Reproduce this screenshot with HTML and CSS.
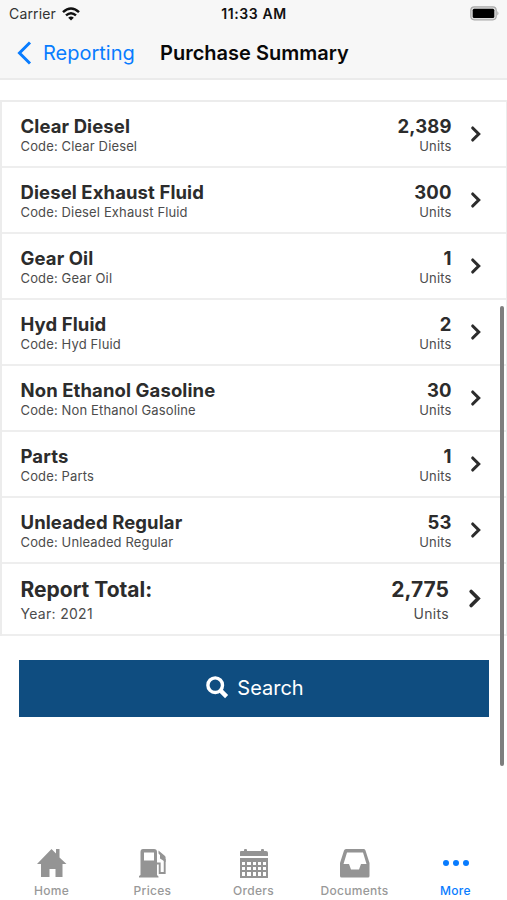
FILE: index.html
```html
<!DOCTYPE html>
<html lang="en">
<head>
<meta charset="utf-8">
<title>Purchase Summary</title>
<link rel="stylesheet" href="styles.css">
</head>
<body>
<svg width="0" height="0" class="defs"><symbol id="chevron" viewBox="0 0 12 18"><path d="M2.700 3 8.700 9 2.700 15" fill="none" stroke="#2c2c2c" stroke-width="3.100" stroke-linecap="round" stroke-linejoin="miter"/></symbol></svg>
<div class="app">
  <header class="header">
    <div class="status">
      <div class="carrier"><span>Carrier</span>
        <svg width="18" height="14" viewBox="0 0 18 14" fill="none" stroke="#111" stroke-width="2.5"><path d="M1 5.2Q9-2.2 17 5.2M4 8.4Q9 4 14 8.4"/><path d="M9 13.5 6.2 10.7Q9 8.4 11.8 10.7Z" fill="#111" stroke="none"/></svg>
      </div>
      <span class="time">11:33 AM</span>
      <svg class="battery" width="31" height="15" viewBox="0 0 31 15"><rect x="1.800" y=".8" width="25.400" height="13" rx="3.5" fill="#ddd" stroke="#aaa" stroke-width="1.2"/><rect x="3.700" y="2.7" width="21.600" height="9.2" rx="1.5"/><path d="M28.3 5q2.4 2.3 0 4.6z" fill="#aaa"/></svg>
    </div>
    <div class="nav">
      <a class="back"><svg width="15" height="24" viewBox="0 0 15 24"><path d="M13 1.5 2.5 12 13 22.500" fill="none" stroke="#087cff" stroke-width="3"/></svg><span>Reporting</span></a>
      <h1>Purchase Summary</h1>
    </div>
  </header>
  <main>
    <div class="list">
      <div class="row"><div class="info"><b>Clear Diesel</b><span>Code: Clear Diesel</span></div><div class="amount"><b>2,389</b><span>Units</span></div><svg class="chevron"><use href="#chevron"/></svg></div>
      <div class="row"><div class="info"><b>Diesel Exhaust Fluid</b><span>Code: Diesel Exhaust Fluid</span></div><div class="amount"><b>300</b><span>Units</span></div><svg class="chevron"><use href="#chevron"/></svg></div>
      <div class="row"><div class="info"><b>Gear Oil</b><span>Code: Gear Oil</span></div><div class="amount"><b>1</b><span>Units</span></div><svg class="chevron"><use href="#chevron"/></svg></div>
      <div class="row"><div class="info"><b>Hyd Fluid</b><span>Code: Hyd Fluid</span></div><div class="amount"><b>2</b><span>Units</span></div><svg class="chevron"><use href="#chevron"/></svg></div>
      <div class="row"><div class="info"><b>Non Ethanol Gasoline</b><span>Code: Non Ethanol Gasoline</span></div><div class="amount"><b>30</b><span>Units</span></div><svg class="chevron"><use href="#chevron"/></svg></div>
      <div class="row"><div class="info"><b>Parts</b><span>Code: Parts</span></div><div class="amount"><b>1</b><span>Units</span></div><svg class="chevron"><use href="#chevron"/></svg></div>
      <div class="row"><div class="info"><b>Unleaded Regular</b><span>Code: Unleaded Regular</span></div><div class="amount"><b>53</b><span>Units</span></div><svg class="chevron"><use href="#chevron"/></svg></div>
      <div class="row total"><div class="info"><b>Report Total:</b><span>Year: 2021</span></div><div class="amount"><b>2,775</b><span>Units</span></div><svg class="chevron"><use href="#chevron"/></svg></div>
    </div>
    <button class="search"><svg width="23" height="23" viewBox="0 0 23 23" fill="none" stroke="#fff"><circle cx="9.200" cy="9.200" r="7.300" stroke-width="3.400"/><path d="m14.600 14.600 6 6" stroke-width="4.400" stroke-linecap="butt"/></svg><span>Search</span></button>
  </main>
  <nav class="tabs">
    <a><svg width="32" height="32" viewBox="0 0 32 32" fill="#949494"><path d="M1 17 15.500 2l4.500 4.500V2h3.500v8.500l7 6.500h-4v13h-7v-8h-6v8H5V17z"/></svg><span>Home</span></a>
    <a><svg width="32" height="32" viewBox="0 0 32 32" fill="#949494"><path fill-rule="evenodd" d="M6 2h11q3 0 3 3v23l1.500 1.500V30.500H2v-1.500L3.500 28V5Q3.500 2 6 2ZM7 5.500v8h10v-8Z"/><path d="M20 16.500h2.700V26h5V12" fill="none" stroke="#949494" stroke-width="1.900"/><path d="M21.500 3.500 28 9q.6.600.6 1.500V15l-5.600-3.500V8l-1.500-1.500z"/></svg><span>Prices</span></a>
    <a><svg width="32" height="32" viewBox="0 0 32 32" fill="#949494"><path d="M2 5q0-1 1-1h3V3q0-1 1-1h1q1 0 1 1v1h14V3q0-1 1-1h1q1 0 1 1v1h2q2 0 2 2v3H2z"/><path fill-rule="evenodd" d="M2 11h28v20H2zM4 15v3h3v-3zm5 0v3h4v-3zm6 0v3h3v-3zm5 0v3h3v-3zm5 0v3h3v-3zM4 20v3h3v-3zm5 0v3h4v-3zm6 0v3h3v-3zm5 0v3h3v-3zm5 0v3h3v-3zM4 25v4h3v-4zm5 0v4h4v-4zm6 0v4h3v-4zm5 0v4h3v-4zm5 0v4h3v-4z"/></svg><span>Orders</span></a>
    <a><svg width="32" height="32" viewBox="0 0 32 32" fill="#949494"><path fill-rule="evenodd" d="M7 2h18q1 0 1.500 1.500L30.500 16v13q0 1.500-1.500 1.500H2.500Q1 30.500 1 29V16L5 3.500Q5.500 2 7 2ZM8 5.500 4.500 17H10l2 5.500h8l2-5.500h5.500L24 5.500Z"/></svg><span>Documents</span></a>
    <a class="active"><svg width="32" height="32" viewBox="0 0 32 32" fill="#087cff"><circle cx="6" cy="16" r="3"/><circle cx="16" cy="16" r="3"/><circle cx="26" cy="16" r="3"/></svg><span>More</span></a>
  </nav>
  <div class="scrollbar"></div>
</div>
</body>
</html>
```
FILE: styles.css
```css
* { box-sizing: border-box; }
body { margin: 0; font-family: Inter, "Liberation Sans", sans-serif; background: #fff; color: #2c2c2c; }
.defs { position: absolute; }
.app { position: relative; width: 507px; height: 900px; display: flex; flex-direction: column; overflow: hidden; }
.header { height: 80px; background: #f7f7f7; border-bottom: 2px solid #ebebeb; }
.status { height: 27px; display: grid; grid-template-columns: 1fr auto 1fr; align-items: center; padding: 0 7px 0 9px; }
.carrier { display: flex; align-items: center; gap: 6px; font-size: 14px; letter-spacing: .15px; color: #333; }
.time { font-size: 14px; font-weight: 600; color: #111; letter-spacing: .6px; margin-right: 1px; }
.battery { justify-self: end; }
.nav { height: 50px; display: flex; align-items: center; padding: 1px 0 0 17px; }
.back { display: flex; align-items: center; gap: 11px; width: 143px; color: #087cff; font-size: 20px; }
h1 { margin: 0; font-size: 20px; font-weight: 600; color: #080808; white-space: nowrap; letter-spacing: 0; }
main { flex: 1; padding-top: 20px; }
.list { border: 2px solid #ececec; border-right-width: 1px; border-bottom: 0; }
.row { height: 66px; display: flex; align-items: flex-start; border-bottom: 2px solid #eee; padding: 12px 24px 0 18.500px; }
.row b, .row span { display: block; white-space: nowrap; }
.row b { font-size: 18.5px; line-height: 24px; font-weight: 700; letter-spacing: .1px; }
.row span { font-size: 13px; line-height: 16px; color: #4c4c4c; letter-spacing: .14px; }
.info { flex: 1; }
.amount { text-align: right; margin-right: 18.500px; }
.chevron { width: 12px; height: 18px; margin-top: 11px; }
.total { height: 72px; }
.total b { font-size: 21px; line-height: 27px; letter-spacing: 0; }
.total span { font-size: 14px; line-height: 22px; letter-spacing: .3px; }
.total .amount { margin-right: 19px; }
.total .chevron { width: 14px; height: 21px; margin-top: 12px; }
.search { display: flex; align-items: center; justify-content: center; gap: 8px; width: 470px; height: 57px; margin: 24px 0 0 19px; padding: 0 0 1px 2px; border: 0; background: #0f4d80; color: #fff; font: 20px Inter, sans-serif; }
.search svg { margin-bottom: 2px; }
.tabs { height: 53px; display: grid; grid-template-columns: repeat(5, 101px); padding-left: 1px; }
.tabs a { display: flex; flex-direction: column; align-items: center; color: #999; font-size: 12px; font-weight: 500; letter-spacing: .3px; }
.tabs span { line-height: 17px; margin-top: 3px; }
.tabs .active { color: #087cff; }
.scrollbar { position: absolute; left: 499.500px; top: 306px; width: 4px; height: 460px; border-radius: 2px; background: #7e7e7e; }
```
